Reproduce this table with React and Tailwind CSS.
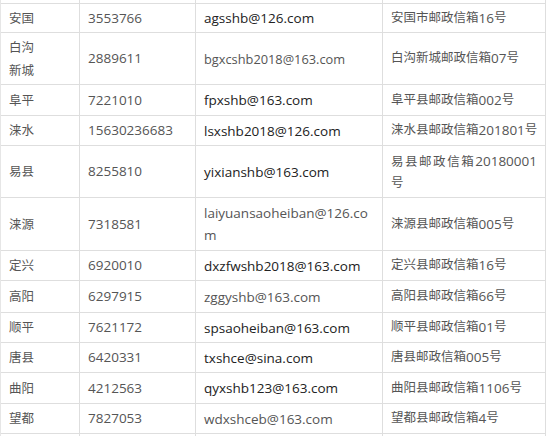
const rows = [
  { h: "h-[29px]", name: ["安国"], tel: "3553766", mail: ["agsshb@126.com"], dark: true, box: "安国市邮政信箱16号" },
  { h: "h-[52px]", name: ["白沟", "新城"], tel: "2889611", mail: ["bgxcshb2018@163.com"], small: true, box: "白沟新城邮政信箱07号" },
  { h: "h-[31px]", name: ["阜平"], tel: "7221010", mail: ["fpxshb@163.com"], dark: true, box: "阜平县邮政信箱002号" },
  { h: "h-[30px]", name: ["涞水"], tel: "15630236683", mail: ["lsxshb2018@126.com"], dark: true, box: "涞水县邮政信箱201801号" },
  { h: "h-[52px]", name: ["易县"], tel: "8255810", mail: ["yixianshb@163.com"], dark: true, box: ["易县邮政信箱20180001", "号"] },
  { h: "h-[53px]", name: ["涞源"], tel: "7318581", mail: ["laiyuansaoheiban@126.co", "m"], box: "涞源县邮政信箱005号" },
  { h: "h-[30px]", name: ["定兴"], tel: "6920010", mail: ["dxzfwshb2018@163.com"], dark: true, box: "定兴县邮政信箱16号" },
  { h: "h-[32px]", name: ["高阳"], tel: "6297915", mail: ["zggyshb@163.com"], box: "高阳县邮政信箱66号" },
  { h: "h-[30px]", name: ["顺平"], tel: "7621172", mail: ["spsaoheiban@163.com"], dark: true, box: "顺平县邮政信箱01号" },
  { h: "h-[30px]", name: ["唐县"], tel: "6420331", mail: ["txshce@sina.com"], dark: true, box: "唐县邮政信箱005号" },
  { h: "h-[31px]", name: ["曲阳"], tel: "4212563", mail: ["qyxshb123@163.com"], dark: true, box: "曲阳县邮政信箱1106号" },
  { h: "h-[30px]", name: ["望都"], tel: "7827053", mail: ["wdxshceb@163.com"], box: "望都县邮政信箱4号" },
];

// chinese runs get a slightly smaller size so they sit like the original font
const T = ({ text }) =>
  text.split(/([\u4e00-\u9fff]+)/).map((part, i) =>
    /[\u4e00-\u9fff]/.test(part) ? (
      <span key={i} className="text-[12.5px]">
        {part}
      </span>
    ) : (
      part
    )
  );

const cell = "flex items-center px-2 border-r border-b border-[#dedede]";

const Row = ({ row }) => (
  <div className={`grid grid-cols-[79px_116px_187px_163px] ${row.h}`}>
    <div className={`${cell} text-[#555]`}>
      <div className="leading-[22px]">
        {row.name.map((n) => (
          <div key={n}>
            <T text={n} />
          </div>
        ))}
      </div>
    </div>
    <div className={`${cell} text-[#555]`}>{row.tel}</div>
    <div
      className={`${cell} ${row.dark ? "text-[#222]" : "text-[#555]"} ${
        row.small ? "text-[12.8px]" : ""
      }`}
    >
      <div className="leading-[22px]">
        {row.mail.map((m) => (
          <div key={m}>{m}</div>
        ))}
      </div>
    </div>
    <div className={`${cell} text-[#555] whitespace-nowrap`}>
      {Array.isArray(row.box) ? (
        <div className="w-full leading-[21px]">
          <div className="text-justify [text-align-last:justify]">
            <T text={row.box[0]} />
          </div>
          <div>
            <T text={row.box[1]} />
          </div>
        </div>
      ) : (
        <T text={row.box} />
      )}
    </div>
  </div>
);

const Edge = ({ h }) => (
  <div className={`grid grid-cols-[79px_116px_187px_163px] ${h}`}>
    <div className={cell} />
    <div className={cell} />
    <div className={cell} />
    <div className={cell} />
  </div>
);

export default function App() {
  return (
    <div
      className="w-[550px] h-[436px] overflow-hidden bg-white text-[13.5px]"
      style={{ fontFamily: '"Open Sans", "Noto Sans CJK SC", sans-serif' }}
    >
      <div className="w-[546px] border-l border-[#e6e6e6]">
        <Edge h="h-[4px]" />
        {rows.map((r) => (
          <Row key={r.tel} row={r} />
        ))}
        <Edge h="h-[30px]" />
      </div>
    </div>
  );
}
